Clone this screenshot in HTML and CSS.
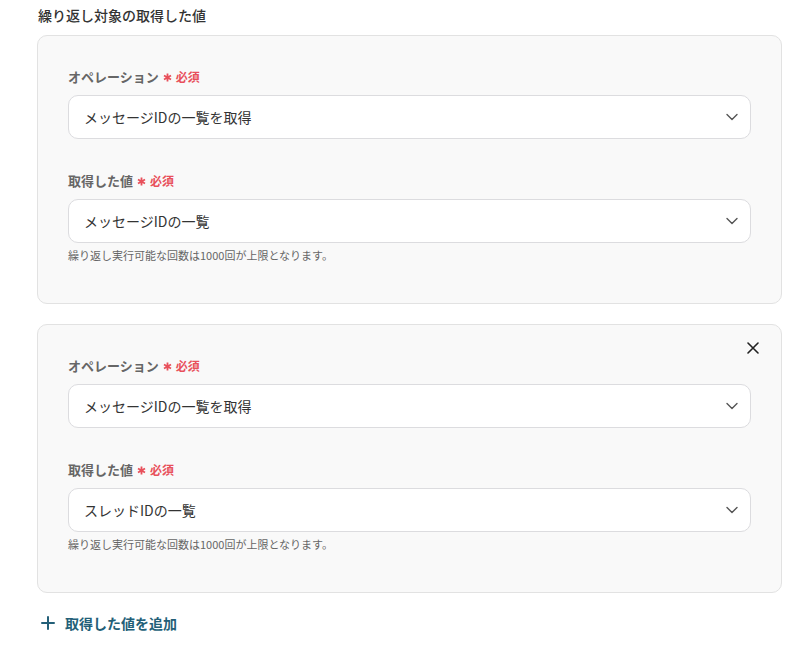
FILE: index.html
```html
<!DOCTYPE html>
<html lang="ja">
<head>
<meta charset="utf-8">
<link rel="stylesheet" href="styles.css">
</head>
<body>
<div class="page">
  <div class="title">繰り返し対象の取得した値</div>

  <div class="card">
    <div class="field">
      <div class="label">オペレーション<svg class="ast" width="9" height="9" viewBox="0 0 10 10"><path d="M5 0.5 V9.5 M1.1 2.75 L8.9 7.25 M8.9 2.75 L1.1 7.25" stroke="#e8505b" stroke-width="2"/></svg><span class="req">必須</span></div>
      <div class="select"><span>メッセージIDの一覧を取得</span>
        <svg class="chev" width="12" height="8" viewBox="0 0 12 8"><path d="M1 1.5 L6 6.5 L11 1.5" fill="none" stroke="#555" stroke-width="1.4" stroke-linecap="round" stroke-linejoin="round"/></svg>
      </div>
    </div>
    <div class="field">
      <div class="label">取得した値<svg class="ast" width="9" height="9" viewBox="0 0 10 10"><path d="M5 0.5 V9.5 M1.1 2.75 L8.9 7.25 M8.9 2.75 L1.1 7.25" stroke="#e8505b" stroke-width="2"/></svg><span class="req">必須</span></div>
      <div class="select"><span>メッセージIDの一覧</span>
        <svg class="chev" width="12" height="8" viewBox="0 0 12 8"><path d="M1 1.5 L6 6.5 L11 1.5" fill="none" stroke="#555" stroke-width="1.4" stroke-linecap="round" stroke-linejoin="round"/></svg>
      </div>
      <div class="help">繰り返し実行可能な回数は1000回が上限となります。</div>
    </div>
  </div>

  <div class="card">
    <svg class="close" width="12" height="12" viewBox="0 0 12 12"><path d="M1 1 L11 11 M11 1 L1 11" stroke="#222" stroke-width="1.6" stroke-linecap="round"/></svg>
    <div class="field">
      <div class="label">オペレーション<svg class="ast" width="9" height="9" viewBox="0 0 10 10"><path d="M5 0.5 V9.5 M1.1 2.75 L8.9 7.25 M8.9 2.75 L1.1 7.25" stroke="#e8505b" stroke-width="2"/></svg><span class="req">必須</span></div>
      <div class="select"><span>メッセージIDの一覧を取得</span>
        <svg class="chev" width="12" height="8" viewBox="0 0 12 8"><path d="M1 1.5 L6 6.5 L11 1.5" fill="none" stroke="#555" stroke-width="1.4" stroke-linecap="round" stroke-linejoin="round"/></svg>
      </div>
    </div>
    <div class="field">
      <div class="label">取得した値<svg class="ast" width="9" height="9" viewBox="0 0 10 10"><path d="M5 0.5 V9.5 M1.1 2.75 L8.9 7.25 M8.9 2.75 L1.1 7.25" stroke="#e8505b" stroke-width="2"/></svg><span class="req">必須</span></div>
      <div class="select"><span>スレッドIDの一覧</span>
        <svg class="chev" width="12" height="8" viewBox="0 0 12 8"><path d="M1 1.5 L6 6.5 L11 1.5" fill="none" stroke="#555" stroke-width="1.4" stroke-linecap="round" stroke-linejoin="round"/></svg>
      </div>
      <div class="help">繰り返し実行可能な回数は1000回が上限となります。</div>
    </div>
  </div>

  <div class="add">
    <svg width="14" height="14" viewBox="0 0 14 14"><path d="M7 1 V13 M1 7 H13" stroke="#235f78" stroke-width="2" stroke-linecap="round"/></svg>
    <span>取得した値を追加</span>
  </div>
</div>
</body>
</html>
```

FILE: styles.css
```css
* { box-sizing: border-box; }
html, body { margin: 0; padding: 0; background: #fff; }
body {
  font-family: "Noto Sans CJK JP", "Noto Sans", sans-serif;
  color: #333;
}
.page {
  width: 782px;
  padding: 5px 0 0 37px;
}
.title {
  font-size: 14px;
  font-weight: 500;
  line-height: 20px;
  padding-left: 1px;
  color: #333;
  margin-bottom: 10px;
}
.card {
  position: relative;
  background: #f9f9f9;
  border: 1px solid #e2e2e2;
  border-radius: 10px;
  padding: 31px 30px 40px 30px;
  height: 269px;
  margin-bottom: 20px;
  display: flex;
  flex-direction: column;
  gap: 32px;
}
.close {
  position: absolute;
  top: 17px;
  right: 22px;
}
.field { display: flex; flex-direction: column; }
.label {
  font-size: 13px;
  font-weight: 700;
  color: #666;
  line-height: 20px;
  margin-bottom: 8px;
  display: flex;
  align-items: center;
}
.ast {
  margin-left: 4px;
}
.req {
  color: #e8505b;
  font-size: 12px;
  font-weight: 700;
  margin-left: 4px;
}
.select {
  height: 44px;
  background: #fff;
  border: 1px solid #dcdcdf;
  border-radius: 10px;
  display: flex;
  align-items: center;
  justify-content: space-between;
  padding: 0 12px 0 15px;
  font-size: 14px;
  color: #333;
}
.help {
  font-size: 11px;
  color: #666;
  line-height: 14px;
  margin-top: 5px;
}
.add {
  display: flex;
  align-items: center;
  gap: 10px;
  padding-left: 4px;
  margin-top: 19px;
  color: #235f78;
  font-size: 14px;
  font-weight: 700;
}
```
